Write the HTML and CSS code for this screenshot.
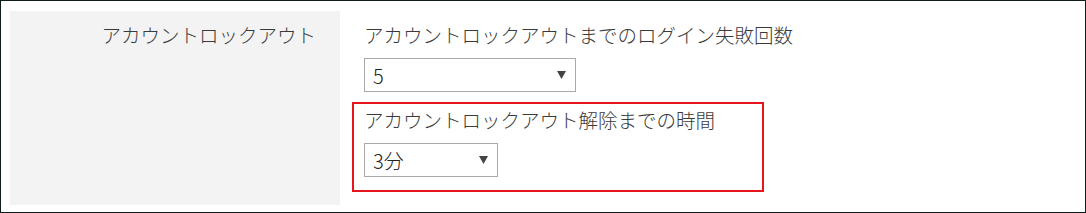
FILE: index.html
```html
<!DOCTYPE html>
<html lang="ja">
<head>
  <meta charset="UTF-8">
  <title>アカウントロックアウト</title>
  <link rel="stylesheet" href="styles.css">
</head>
<body>
  <div class="frame">
    <div class="row">
      <div class="label">アカウントロックアウト</div>

      <div class="fields">
        <div class="group">
          <div class="title">アカウントロックアウトまでのログイン失敗回数</div>
          <div class="select-wrap wide">
            <select class="select">
              <option>5</option>
            </select>
            <svg class="arrow" width="9" height="8" viewBox="0 0 9 8"><polygon points="0,0 9,0 4.5,8" fill="#444"/></svg>
          </div>
        </div>

        <div class="group highlight">
          <div class="title">アカウントロックアウト解除までの時間</div>
          <div class="select-wrap narrow">
            <select class="select">
              <option>3分</option>
            </select>
            <svg class="arrow" width="9" height="8" viewBox="0 0 9 8"><polygon points="0,0 9,0 4.5,8" fill="#444"/></svg>
          </div>
        </div>
      </div>
    </div>
  </div>
</body>
</html>
```

FILE: styles.css
```css
body {
  margin: 0;
  background: #fff;
  font-family: "Noto Sans CJK JP", "Noto Sans", sans-serif;
  font-weight: 300;
  color: #3a3a3a;
}

.frame {
  width: 1086px;
  height: 213px;
  box-sizing: border-box;
  border: 1px solid #0e1c1c;
  padding: 10px 0 0 9px;
}

.row {
  display: flex;
}

.label {
  width: 330px;
  box-sizing: border-box;
  background: #f3f3f3;
  text-align: right;
  font-size: 19.5px;
  line-height: 28px;
  padding: 10px 24px 0 0;
}

.fields {
  display: flex;
  flex-direction: column;
  align-items: flex-start;
  padding: 6px 0 13px 12px;
}

.group {
  border: 2px solid transparent;
  padding: 2px 10px 8px;
}

.group.highlight {
  border-color: #e8141c;
  padding-bottom: 13px;
  width: 388px;
}

.title {
  font-size: 19.5px;
  line-height: 28px;
  margin-bottom: 9px;
}

.select-wrap {
  position: relative;
  height: 34px;
}

.select-wrap.wide {
  width: 212px;
}

.select-wrap.narrow {
  width: 134px;
}

.select {
  -webkit-appearance: none;
  appearance: none;
  width: 100%;
  height: 34px;
  box-sizing: border-box;
  border: 1px solid #a9a9a9;
  border-radius: 0;
  background: #fff;
  color: #222;
  font-family: "Noto Sans CJK JP", "Noto Sans", sans-serif;
  font-weight: 300;
  font-size: 20px;
  padding: 0 0 0 8px;
  margin: 0;
}

.arrow {
  position: absolute;
  top: 13px;
  right: 10px;
}
```
